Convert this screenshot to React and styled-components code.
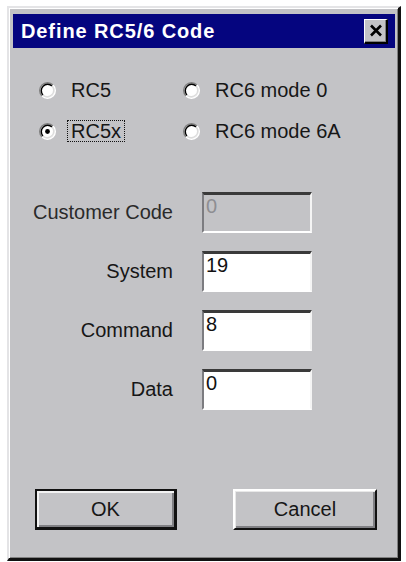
import React from "react";
import styled, { createGlobalStyle } from "styled-components";

const GlobalStyle = createGlobalStyle`
  html, body {
    margin: 0;
    padding: 0;
    background: #ffffff;
  }
  body {
    font-family: "Liberation Sans", Arial, sans-serif;
    color: #161616;
  }
`;

const FACE = "#c3c3c6";

const Window = styled.div`
  box-sizing: border-box;
  margin: 6px 0 0 7px;
  width: 394px;
  height: 555px;
  background: ${FACE};
  border-style: solid;
  border-width: 2px 3px 3px 2px;
  border-color: #e4e4e6 #111 #111 #e4e4e6;
  box-shadow: inset 1px 1px 0 #ffffff, inset -1px -1px 0 #808080;
  padding: 6px 3px 0 4px;
  display: flex;
  flex-direction: column;
`;

const TitleBar = styled.div`
  height: 34px;
  background: #05057f;
  display: flex;
  align-items: center;
  justify-content: space-between;
  padding: 0 7px 0 8px;
`;

const Title = styled.span`
  color: #ffffff;
  font-weight: bold;
  font-size: 20px;
  letter-spacing: 0.9px;
`;

const CloseButton = styled.button`
  box-sizing: border-box;
  width: 24px;
  height: 25px;
  padding: 0;
  background: ${FACE};
  border-style: solid;
  border-width: 1px 2px 2px 1px;
  border-color: #ffffff #000 #000 #ffffff;
  box-shadow: inset -1px -1px 0 #808080;
  display: flex;
  align-items: center;
  justify-content: center;
`;

const RadioGrid = styled.div`
  margin-top: 30px;
  padding-left: 26px;
  display: grid;
  grid-template-columns: 144px auto;
  row-gap: 17px;
`;

const RadioItem = styled.div`
  display: flex;
  align-items: center;
  height: 24px;
  gap: 11px;
`;

const RadioLabel = styled.span`
  font-size: 20px;
  line-height: 20px;
  padding: 0 3px;
  border: 1px dotted ${(p) => (p.$focused ? "#111" : "transparent")};
`;

const Fields = styled.div`
  margin-top: 49px;
  display: grid;
  grid-template-columns: 160px 110px;
  column-gap: 29px;
  row-gap: 18px;
  align-items: center;
`;

const FieldLabel = styled.label`
  font-size: 20px;
  text-align: right;
  color: ${(p) => (p.$disabled ? "#2a2a2a" : "#161616")};
`;

const TextBox = styled.input`
  box-sizing: border-box;
  width: 110px;
  height: 41px;
  margin: 0;
  padding: 0 2px 14px 2px;
  font-family: "Liberation Sans", Arial, sans-serif;
  font-size: 20px;
  color: ${(p) => (p.disabled ? "#8e8e92" : "#111")};
  background: ${(p) => (p.disabled ? FACE : "#ffffff")};
  border-style: solid;
  border-width: 3px 2px 2px 2px;
  border-color: #3a3a3a #f4f4f4 #ffffff #7c7c80;
  outline: none;
`;

const ButtonRow = styled.div`
  margin-top: 79px;
  padding-left: 22px;
  display: flex;
  gap: 56px;
`;

const PushButton = styled.button`
  box-sizing: border-box;
  width: ${(p) => p.$w}px;
  height: 41px;
  padding: 0;
  font-family: "Liberation Sans", Arial, sans-serif;
  font-size: 20px;
  color: #161616;
  background: ${FACE};
  border-style: solid;
  border-width: ${(p) => (p.$default ? "2px 3px 3px 2px" : "2px 2px 2px 2px")};
  border-color: ${(p) =>
    p.$default ? "#111 #111 #111 #111" : "#ffffff #111 #111 #ffffff"};
  box-shadow: ${(p) =>
    p.$default
      ? "inset 2px 2px 0 #f2f2f2, inset -2px -2px 0 #808084"
      : "inset 1px 1px 0 #e8e8e8, inset -2px -2px 0 #808084"};
`;

function RadioMark({ checked }) {
  return (
    <svg width="17" height="17" viewBox="0 0 12 12">
      <circle cx="6" cy="6" r="5" fill="#ffffff" />
      <path d="M2.11 9.89 A5.5 5.5 0 0 1 9.89 2.11" fill="none" stroke="#808080" strokeWidth="1" />
      <path d="M2.82 9.18 A4.5 4.5 0 0 1 9.18 2.82" fill="none" stroke="#000" strokeWidth="1" />
      <path d="M9.89 2.11 A5.5 5.5 0 0 1 2.11 9.89" fill="none" stroke="#ffffff" strokeWidth="1" />
      <path d="M9.18 2.82 A4.5 4.5 0 0 1 2.82 9.18" fill="none" stroke="#dcdcdc" strokeWidth="1" />
      {checked && <circle cx="6" cy="6" r="1.7" fill="#000" />}
    </svg>
  );
}

function Radio({ label, checked, focused }) {
  return (
    <RadioItem>
      <RadioMark checked={checked} />
      <RadioLabel $focused={focused}>{label}</RadioLabel>
    </RadioItem>
  );
}

const fields = [
  { label: "Customer Code", value: "0", disabled: true },
  { label: "System", value: "19" },
  { label: "Command", value: "8" },
  { label: "Data", value: "0" },
];

export default function App() {
  return (
    <>
      <GlobalStyle />
      <Window>
        <TitleBar>
          <Title>Define RC5/6 Code</Title>
          <CloseButton aria-label="Close">
            <svg width="14" height="13" viewBox="0 0 14 13">
              <path d="M2 1.5 L12 11.5 M12 1.5 L2 11.5" stroke="#000" strokeWidth="2.6" />
            </svg>
          </CloseButton>
        </TitleBar>

        <RadioGrid>
          <Radio label="RC5" />
          <Radio label="RC6 mode 0" />
          <Radio label="RC5x" checked focused />
          <Radio label="RC6 mode 6A" />
        </RadioGrid>

        <Fields>
          {fields.map((f) => (
            <React.Fragment key={f.label}>
              <FieldLabel $disabled={f.disabled}>{f.label}</FieldLabel>
              <TextBox defaultValue={f.value} disabled={f.disabled} />
            </React.Fragment>
          ))}
        </Fields>

        <ButtonRow>
          <PushButton $w={142} $default>OK</PushButton>
          <PushButton $w={144}>Cancel</PushButton>
        </ButtonRow>
      </Window>
    </>
  );
}
